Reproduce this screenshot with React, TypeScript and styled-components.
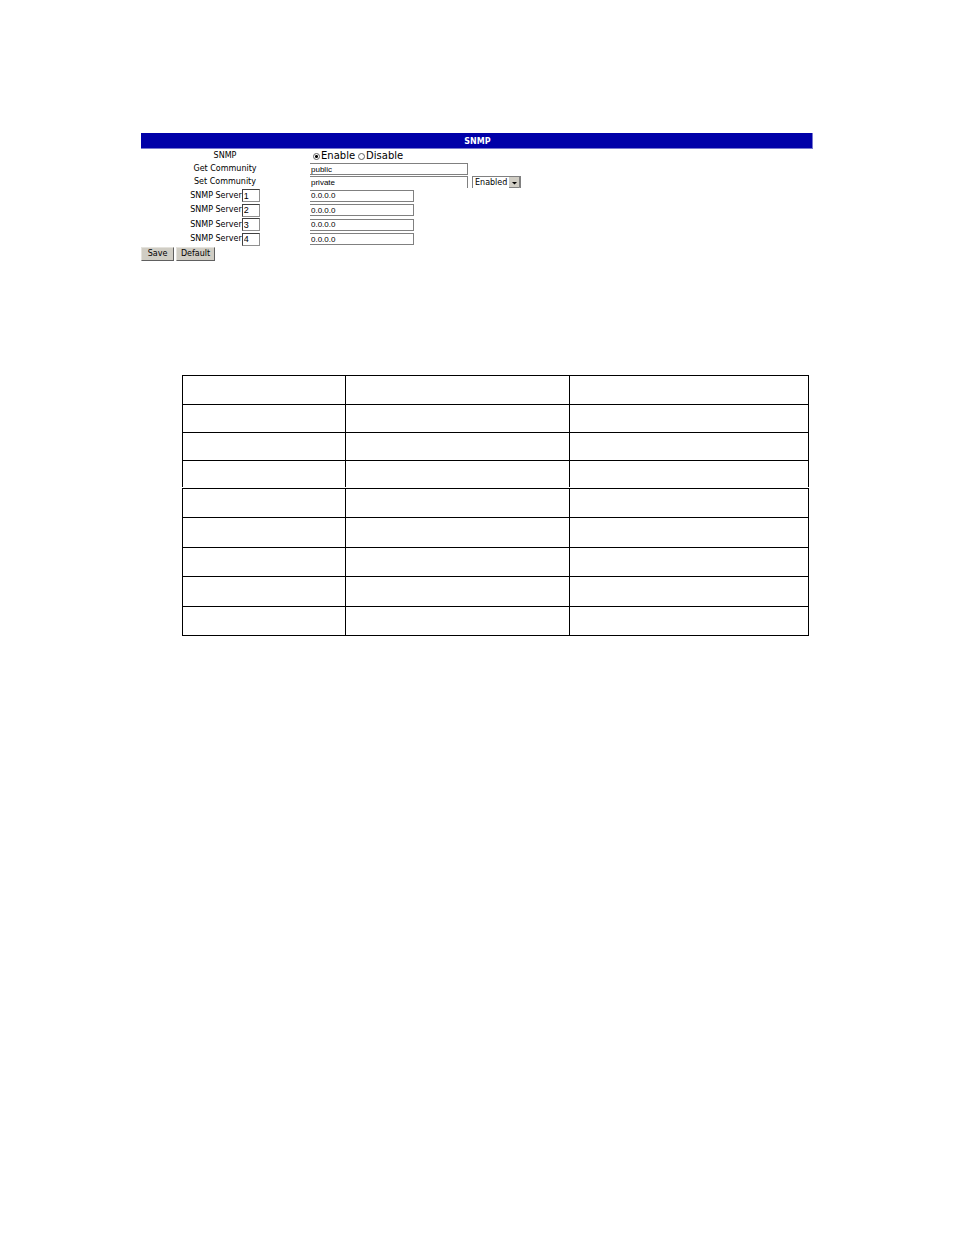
import React from "react";
import styled, { createGlobalStyle } from "styled-components";

const GlobalStyle = createGlobalStyle`
  * { box-sizing: border-box; }
  body {
    margin: 0;
    background: #fff;
    color: #000;
    font: 8px/12px "DejaVu Sans", Verdana, sans-serif;
  }
`;

const Page = styled.main`
  padding: 133px 141px 0;
`;

const Title = styled.h1`
  height: 16px;
  margin: 0;
  padding-left: 2px;
  background: #0000a8;
  border: solid #7878d0;
  border-width: 0 1px 1px 0;
  color: #fff;
  font-size: 8px;
  line-height: 18px;
  text-align: center;
`;

const Row = styled.div<{ $height: number }>`
  display: grid;
  grid-template-columns: 1fr 3fr;
  align-items: center;
  height: ${(p) => p.$height}px;
`;

const Caption = styled.div`
  display: flex;
  align-items: center;
  justify-content: center;
  line-height: 14px;
`;

const Value = styled.div`
  display: flex;
  align-items: center;
  gap: 4px;
  padding-left: 1px;
`;

const TextBox = styled.input<{ $width: number; $open?: boolean }>`
  width: ${(p) => p.$width}px;
  height: 12px;
  padding: 0 1px;
  border: solid #808080;
  border-width: 1px 1px ${(p) => (p.$open ? 0 : 1)}px 0;
  border-radius: 0;
  background: #fff;
  color: #000;
  font: 8px/10px "Liberation Sans", Arial, sans-serif;
`;

const IndexBox = styled(TextBox)`
  height: 13px;
  border-width: 1px;
  border-color: #404040 #909090 #909090 #404040;
  font-size: 9px;
`;

const Choice = styled.label`
  display: flex;
  align-items: center;
  gap: 1px;
  font-size: 10px;
  line-height: 14px;
`;

const Choices = styled(Value)`
  gap: 3px;
  padding-left: 4px;
`;

const Radio = styled.input`
  appearance: none;
  width: 7px;
  height: 7px;
  margin: 0;
  border: 1px solid #606060;
  border-radius: 50%;
  background: #fff;
  &:checked {
    background: radial-gradient(circle, #000 1px, #fff 2px);
  }
`;

const SelectFrame = styled.div`
  display: grid;
  grid-template-columns: 1fr 11px;
  width: 49px;
  height: 12px;
  border: solid #808080;
  border-width: 1px 1px 0;
`;

const Select = styled.select`
  grid-area: 1 / 1 / 2 / 3;
  appearance: none;
  min-width: 0;
  padding: 0 2px;
  border: 0;
  background: transparent;
  color: #000;
  font: 8px/11px "DejaVu Sans", Verdana, sans-serif;
`;

const Arrow = styled.svg`
  grid-area: 1 / 2;
  width: 11px;
  height: 11px;
  pointer-events: none;
`;

const Actions = styled.div`
  display: flex;
  gap: 2px;
  padding-top: 1px;
`;

const Button = styled.button<{ $width: number }>`
  width: ${(p) => p.$width}px;
  height: 14px;
  padding: 0;
  border: 1px solid;
  border-color: #e4e2dc #606060 #606060 #e4e2dc;
  background: #d0cdc4;
  color: #000;
  font: 8px/12px "DejaVu Sans", Verdana, sans-serif;
`;

const Tables = styled.section`
  display: flex;
  flex-direction: column;
  gap: 1px;
  margin: 114px 4px 0 41px;
`;

const Grid = styled.table<{ $open?: boolean }>`
  width: 100%;
  table-layout: fixed;
  border-spacing: 0;
  border: solid #000;
  border-width: 1px 1px ${(p) => (p.$open ? 0 : 1)}px 1px;

  td {
    padding: 0;
    border: solid #000;
    border-width: 0 1px 1px 0;
  }
  td:last-child { border-right: 0; }
  tr:last-child td { border-bottom: 0; }
`;

const GridRow = styled.tr<{ $height: number }>`
  height: ${(p) => p.$height}px;
`;

const Column = styled.col<{ $share: number }>`
  width: ${(p) => p.$share}%;
`;

const servers = [
  { id: 1, height: 15 },
  { id: 2, height: 14 },
  { id: 3, height: 15 },
  { id: 4, height: 14 },
];

function BlankTable({ heights, open }: { heights: number[]; open?: boolean }) {
  return (
    <Grid $open={open}>
      <colgroup>
        <Column $share={26} />
        <Column $share={35.9} />
        <col />
      </colgroup>
      <tbody>
        {heights.map((height, i) => (
          <GridRow key={i} $height={height}>
            <td />
            <td />
            <td />
          </GridRow>
        ))}
      </tbody>
    </Grid>
  );
}

export default function App() {
  return (
    <>
      <GlobalStyle />
      <Page>
        <form onSubmit={(e) => e.preventDefault()}>
          <Title>SNMP</Title>
          <Row $height={13}>
            <Caption>SNMP</Caption>
            <Choices role="radiogroup" aria-label="SNMP">
              <Choice>
                <Radio type="radio" name="snmp" defaultChecked />
                Enable
              </Choice>
              <Choice>
                <Radio type="radio" name="snmp" />
                Disable
              </Choice>
            </Choices>
          </Row>
          <Row $height={13}>
            <Caption as="label" htmlFor="get">Get Community</Caption>
            <Value>
              <TextBox id="get" $width={158} defaultValue="public" />
            </Value>
          </Row>
          <Row $height={13}>
            <Caption as="label" htmlFor="set">Set Community</Caption>
            <Value>
              <TextBox id="set" $width={158} $open defaultValue="private" />
              <SelectFrame>
                <Select aria-label="Set Community state" defaultValue="Enabled">
                  <option>Enabled</option>
                  <option>Disabled</option>
                </Select>
                <Arrow viewBox="0 0 11 11" aria-hidden="true">
                  <path d="M0 0h11v11H0z" fill="#d0cdc4" />
                  <path d="M10.500 0v10.500H0" fill="none" stroke="#808080" />
                  <path d="M3 5h5L5.500 7.500z" fill="#000" />
                </Arrow>
              </SelectFrame>
            </Value>
          </Row>
          {servers.map(({ id, height }) => (
            <Row key={id} $height={height}>
              <Caption>
                <label htmlFor={`index-${id}`}>SNMP Server</label>
                <IndexBox id={`index-${id}`} $width={18} defaultValue={id} />
              </Caption>
              <Value>
                <TextBox
                  aria-label={`SNMP Server ${id} address`}
                  $width={104}
                  defaultValue="0.0.0.0"
                />
              </Value>
            </Row>
          ))}
          <Actions>
            <Button type="submit" $width={33}>Save</Button>
            <Button type="reset" $width={39}>Default</Button>
          </Actions>
        </form>
        <Tables>
          <BlankTable heights={[29, 28, 28, 26]} open />
          <BlankTable heights={[29, 30, 29, 30, 28]} />
        </Tables>
      </Page>
    </>
  );
}
